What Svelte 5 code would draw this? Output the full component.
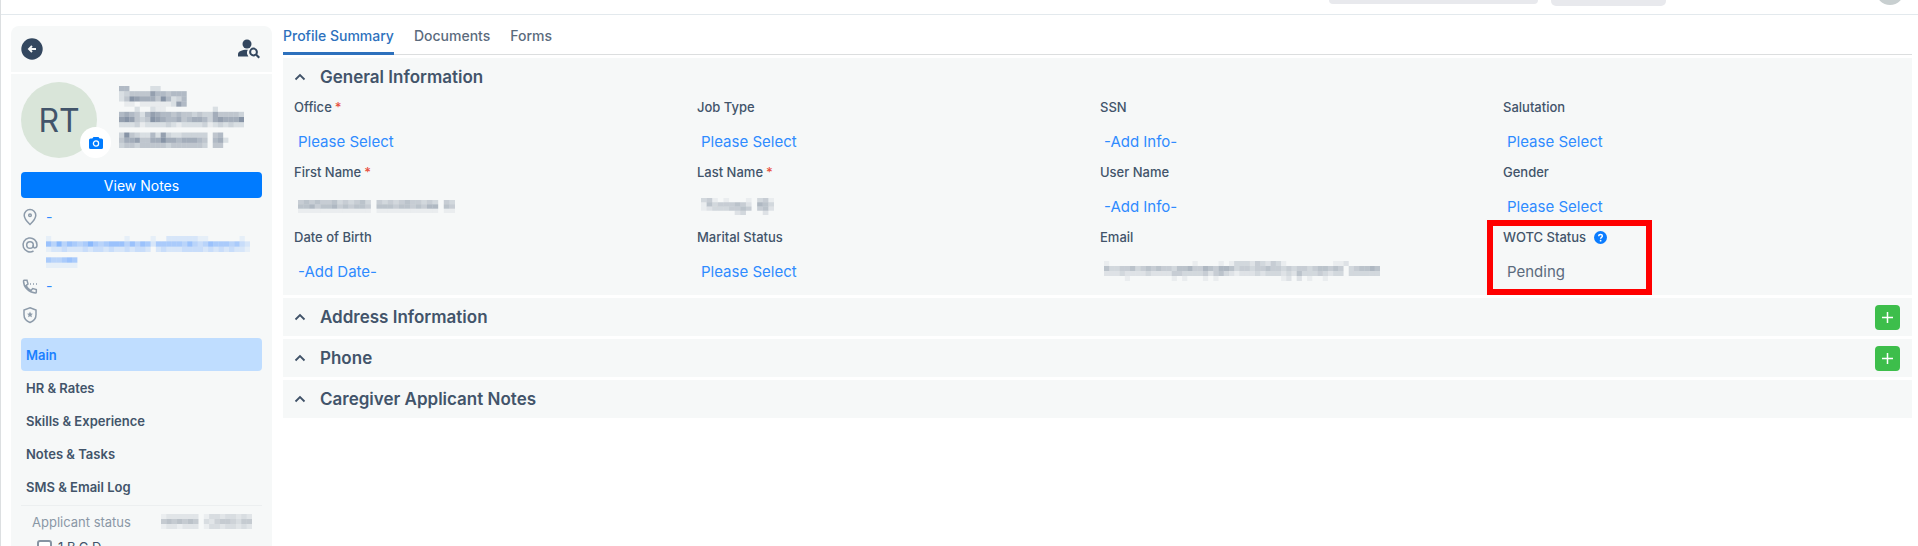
<script>
  const nav = ['Main', 'HR & Rates', 'Skills & Experience', 'Notes & Tasks', 'SMS & Email Log'];
  const tabs = ['Profile Summary', 'Documents', 'Forms'];
  let activeNav = $state('Main');
  let activeTab = $state('Profile Summary');

  // Each string is one row of squares; every digit is the strength of a square.
  const masks = {
    name: [
      '550000220000000000000000',
      '234444755455500000000000',
      '248766648523500000000000',
      '011011111127500000000000',
      '000200211000000000200000',
      '565425765545443433644443',
      '787434876556456653676668',
      '222312222321222231232322',
      '000000000000000000000000',
      '384322527322333330450000',
      '466744668665666540562000',
      '344344444344444430440000'
    ],
    mail: [
      '100000000000000100001002222221100000010',
      '647465457545666464652555554643465554532',
      '122322232332322323320232223333232323221',
      '000000000000000000000000000000000000000',
      '544565000000000000000000000000000000000',
      '111111000000000000000000000000000000000'
    ],
    first: ['4545445343453043434544343043', '5564556454554055545545466054', '1111111111111011111111111011'],
    last: ['3410100010341', '1534445420653', '1233344540452', '0000002300020'],
    email: [
      '10000000000000000100001013332432431000000000112000000',
      '53344534545443556446546653443445443434434554540345565',
      '22232222322224433334245321222323332325333432330333333',
      '00001000000001010001010000000000001202010010000000000'
    ],
    status: ['12222220133233232', '56565650324554355', '12212220133233232']
  };

  const fields = [
    { label: 'Office', required: true, value: 'Please Select' },
    { label: 'Job Type', value: 'Please Select' },
    { label: 'SSN', value: '-Add Info-' },
    { label: 'Salutation', value: 'Please Select' },
    { label: 'First Name', required: true, mask: 'first', w: 157, h: 13 },
    { label: 'Last Name', required: true, mask: 'last', w: 73, h: 17 },
    { label: 'User Name', value: '-Add Info-' },
    { label: 'Gender', value: 'Please Select' },
    { label: 'Date of Birth', value: '-Add Date-' },
    { label: 'Marital Status', value: 'Please Select' },
    { label: 'Email', mask: 'email', w: 276, h: 20 },
    { label: 'WOTC Status', value: 'Pending', plain: true, help: true, marked: true }
  ];

  const sections = [
    { title: 'Address Information', add: true },
    { title: 'Phone', add: true },
    { title: 'Caregiver Applicant Notes', add: false }
  ];
</script>

{#snippet mosaic(key, width, height, color)}
  <svg class="mosaic" {width} {height} viewBox="0 0 {masks[key][0].length} {masks[key].length}" preserveAspectRatio="none" fill={color} aria-hidden="true">
    {#each masks[key] as row, y}
      {#each row.split('') as level, x}
        {#if level !== '0'}
          <rect {x} {y} width="1" height="1" opacity={Number(level) / 12} />
        {/if}
      {/each}
    {/each}
  </svg>
{/snippet}

{#snippet chevron()}
  <svg width="12" height="8" viewBox="0 0 12 8" fill="none" stroke="#405268" stroke-width="1.8" aria-hidden="true"><path d="M1.5 6.5 6 2l4.5 4.5" /></svg>
{/snippet}

<div class="page">
  <header>
    <input class="search" type="search" aria-label="Search" />
    <button class="action" aria-label="Quick action"></button>
    <button class="user" aria-label="Account"></button>
  </header>

  <div class="body">
    <aside>
      <div class="card tools">
        <button class="icon" aria-label="Back">
          <svg width="22" height="22" viewBox="0 0 22 22"><circle cx="11" cy="11" r="10.7" fill="#33475f" /><path d="M15 11H8.500M11 8 8 11l3 3" fill="none" stroke="#f6f8f8" stroke-width="1.900" /></svg>
        </button>
        <button class="icon" aria-label="Find person">
          <svg width="22" height="20" viewBox="0 0 22 20"><circle cx="9" cy="5" r="4.500" fill="#33475f" /><path d="M0 17.500v-2.300c0-3 5-4.700 9.800-4.400a6 6 0 0 0 .6 6.700z" fill="#33475f" /><circle cx="15.500" cy="13" r="3.400" fill="none" stroke="#33475f" stroke-width="2" /><path d="m18 15.500 3.300 3.300" stroke="#33475f" stroke-width="2.200" /></svg>
        </button>
      </div>

      <div class="card profile">
        <div class="person">
          <div class="avatar">
            RT
            <button class="camera" aria-label="Change photo">
              <svg width="14" height="12" viewBox="0 0 14 12"><path d="M4.500 0h5l1.200 1.500H12.500A1.500 1.500 0 0 1 14 3v7.500a1.500 1.500 0 0 1-1.500 1.500h-11A1.500 1.500 0 0 1 0 10.500V3a1.500 1.500 0 0 1 1.500-1.500h1.800z" fill="#007bff" /><circle cx="7" cy="6.500" r="2.600" fill="none" stroke="#fff" stroke-width="1.300" /></svg>
            </button>
          </div>
          {@render mosaic('name', 125, 62, '#50627c')}
        </div>

        <button class="notes">View Notes</button>

        <ul class="contact">
          <li>
            <svg width="18" height="18" viewBox="0 0 18 18"><path d="M9 16.500C5.200 13 3.200 10.200 3.200 7.300a5.800 5.800 0 0 1 11.600 0c0 2.900-2 5.700-5.800 9.200z" /><circle cx="9" cy="7.300" r="1.300" /></svg>
            <a href="#address">-</a>
          </li>
          <li class="tall">
            <svg width="18" height="18" viewBox="0 0 18 18"><circle cx="9" cy="9" r="3.300" /><path d="M12.300 9v1.300c0 2.300 3.700 2.300 3.700-1.300a7 7 0 1 0-3.500 6" /></svg>
            {@render mosaic('mail', 204, 32, '#3f8cff')}
          </li>
          <li>
            <svg width="18" height="18" viewBox="0 0 18 18"><path d="M3 3.200h3l1 3.700-2 1.700a12 12 0 0 0 5 5l1.700-2 3.600 1v2.700c0 .5-.3.800-.9.800C7.600 15.500 2.500 10 2.500 4c0-.5.200-.8.500-.8z" /><path d="M9 7h1M12 7h1M15 7h1" /></svg>
            <a href="#phone">-</a>
          </li>
          <li>
            <svg width="18" height="18" viewBox="0 0 18 18"><path d="m9 1.800 6 2.200v4.800c0 3.500-2.300 6.300-6 7.700-3.700-1.400-6-4.200-6-7.700V4z" /><path d="m9 5.500.9 2 2.100.2-1.600 1.400.5 2.200L9 10.200l-1.900 1.100.5-2.200L6 7.700l2.100-.2z" fill="#8d9baa" stroke="none" /></svg>
          </li>
        </ul>

        <nav>
          {#each nav as item}
            <button class:active={activeNav === item} onclick={() => (activeNav = item)}>{item}</button>
          {/each}
        </nav>

        <div class="status">
          <span>Applicant status</span>
          {@render mosaic('status', 91, 15, '#7f8b9a')}
        </div>
        <label class="check"><input type="checkbox" />1.B.C.D</label>
      </div>
    </aside>

    <main>
      <div class="tabs" role="tablist">
        {#each tabs as tab}
          <button role="tab" aria-selected={activeTab === tab} class:active={activeTab === tab} onclick={() => (activeTab = tab)}>{tab}</button>
        {/each}
      </div>

      <section class="panel">
        <h2><button class="toggle" aria-expanded="true">{@render chevron()}General Information</button></h2>
        <div class="fields">
          {#each fields as f, i}
            <div class="field" class:marked={f.marked}>
              <div class="label" id="field-{i}">
                {f.label}{#if f.required}<span class="star">*</span>{/if}
                {#if f.help}
                  <button class="icon help" aria-label="About WOTC status">
                    <svg width="13" height="13" viewBox="0 0 13 13"><circle cx="6.500" cy="6.500" r="6.500" fill="#0a7cff" /><path d="M4.700 5.200c0-2.400 3.700-2.300 3.700-.1 0 1.300-1.800 1.300-1.800 2.600" fill="none" stroke="#fff" stroke-width="1.400" /><circle cx="6.600" cy="9.700" r=".9" fill="#fff" /></svg>
                  </button>
                {/if}
              </div>
              {#if f.mask}
                <div class="value">{@render mosaic(f.mask, f.w, f.h, '#68788c')}</div>
              {:else}
                <button class="value" class:plain={f.plain} aria-describedby="field-{i}">{f.value}</button>
              {/if}
            </div>
          {/each}
        </div>
      </section>

      {#each sections as s}
        <section class="panel row">
          <h2><button class="toggle" aria-expanded="false">{@render chevron()}{s.title}</button></h2>
          {#if s.add}
            <button class="add" aria-label="Add {s.title}">
              <svg width="11" height="11" viewBox="0 0 11 11" stroke="#fff" stroke-width="1.500"><path d="M5.500 0v11M0 5.500h11" /></svg>
            </button>
          {/if}
        </section>
      {/each}
    </main>
  </div>
</div>

<style>
  :global(body) {
    margin: 0;
    background: #fff;
  }
  .page {
    box-sizing: border-box;
    height: 100vh;
    overflow: hidden;
    border-left: 1px solid #dcdfe1;
    font-family: Inter, 'Liberation Sans', sans-serif;
    font-size: 14px;
    color: #42546a;
  }
  button,
  input {
    font: inherit;
    color: inherit;
    margin: 0;
    padding: 0;
    border: 0;
    background: none;
  }
  button {
    cursor: pointer;
    text-align: left;
  }
  .mosaic,
  svg {
    display: block;
    flex: none;
  }
  header {
    display: flex;
    justify-content: flex-end;
    align-items: flex-end;
    height: 14px;
    overflow: hidden;
    border-bottom: 1px solid #e3e9ed;
  }
  header .search {
    width: 209px;
    height: 32px;
    margin: 0 13px 10px 0;
    border-radius: 4px;
    background: #e8e9ed;
  }
  header .action {
    width: 115px;
    height: 32px;
    margin: 0 210px 8px 0;
    border-radius: 5px;
    background: #e8e9ed;
  }
  header .user {
    width: 28px;
    height: 28px;
    margin: 0 14px 9px 0;
    border-radius: 50%;
    background: #c8cfd0;
  }
  .body {
    display: flex;
    gap: 11px;
    padding: 0 6px 0 10px;
  }
  aside {
    flex: none;
    display: flex;
    flex-direction: column;
    gap: 2px;
    width: 261px;
    padding-top: 11px;
  }
  .card {
    background: #f6f8f8;
  }
  .tools {
    display: flex;
    justify-content: space-between;
    align-items: center;
    height: 46px;
    padding: 0 12px 0 10px;
    border-radius: 8px 8px 0 0;
  }
  .profile {
    padding: 8px 10px 20px;
  }
  .person {
    display: flex;
    align-items: flex-start;
    gap: 22px;
  }
  .person > :global(.mosaic) {
    margin-top: 4px;
  }
  .avatar {
    position: relative;
    display: grid;
    place-items: center;
    width: 76px;
    height: 76px;
    border-radius: 50%;
    background: #d9e5d9;
    color: #42546a;
    font-size: 32px;
  }
  .camera {
    position: absolute;
    right: -14px;
    bottom: 0;
    display: grid;
    place-items: center;
    width: 31px;
    height: 31px;
    border-radius: 50%;
    background: #fff;
  }
  .notes {
    width: 100%;
    height: 26px;
    margin-top: 14px;
    border-radius: 4px;
    background: #007bff;
    color: #fff;
    text-align: center;
  }
  .contact {
    list-style: none;
    margin: 4px 0 9px;
    padding: 0;
  }
  .contact li {
    display: flex;
    gap: 7px;
    height: 29px;
    align-items: center;
    line-height: 20px;
  }
  .contact li.tall {
    height: 40px;
    align-items: flex-start;
    padding-top: 5px;
    box-sizing: border-box;
  }
  .contact svg:not(.mosaic) {
    fill: none;
    stroke: #8d9baa;
    stroke-width: 1.5;
  }
  .contact a {
    color: #2f8bff;
    text-decoration: none;
  }
  nav {
    display: flex;
    flex-direction: column;
    padding-bottom: 2px;
    border-bottom: 1px solid #eceff0;
  }
  nav button {
    height: 33px;
    padding: 0 5px;
    border-radius: 4px;
    font-size: 13px;
    font-weight: 600;
  }
  nav .active {
    background: #bfddff;
    color: #1a80ff;
  }
  .status {
    display: flex;
    justify-content: space-between;
    align-items: center;
    height: 31px;
    padding: 0 10px 0 11px;
    font-size: 13px;
    color: #8a97a6;
  }
  .check {
    display: flex;
    align-items: center;
    gap: 6px;
    padding-left: 16px;
    font-size: 13px;
    line-height: 20px;
  }
  .check input {
    appearance: none;
    width: 15px;
    height: 15px;
    border: 2px solid #8794a3;
    border-radius: 3px;
    background: #fff;
  }
  main {
    flex: 1;
    min-width: 0;
    display: flex;
    flex-direction: column;
    gap: 3px;
  }
  .tabs {
    display: flex;
    gap: 20px;
    height: 39px;
    border-bottom: 1px solid #dcdedf;
  }
  .tabs button {
    box-sizing: border-box;
    height: 40px;
    padding-top: 4px;
    border-bottom: 3px solid transparent;
    font-weight: 500;
    color: #5b6b7d;
  }
  .tabs button.active {
    color: #2e71bd;
    border-color: #2e71bd;
  }
  .panel {
    background: #f6f8f8;
    padding: 0 12px 0 11px;
  }
  .row {
    display: flex;
    align-items: center;
    justify-content: space-between;
  }
  h2 {
    margin: 0;
    font-size: 17px;
    font-weight: 600;
  }
  .toggle {
    display: flex;
    align-items: center;
    gap: 14px;
    height: 38px;
  }
  .fields {
    display: grid;
    grid-template-columns: repeat(4, 1fr);
    margin-right: -6px;
    padding: 1px 0 3px;
  }
  .field {
    position: relative;
    height: 65px;
  }
  .label {
    display: flex;
    align-items: center;
    height: 20px;
    margin-bottom: 12px;
    font-size: 13px;
    font-weight: 500;
  }
  .star {
    margin-left: 3px;
    color: #e8513f;
  }
  .help {
    margin-left: 8px;
  }
  .value {
    display: flex;
    align-items: center;
    height: 24px;
    padding-left: 4px;
    font-size: 15px;
    color: #2f8bff;
  }
  .plain {
    color: #5b6b7d;
  }
  .marked::after {
    content: '';
    position: absolute;
    left: -16px;
    top: -7px;
    width: 153px;
    height: 63px;
    border: 6px solid #f00;
    pointer-events: none;
  }
  .add {
    display: grid;
    place-items: center;
    width: 25px;
    height: 25px;
    border-radius: 4px;
    background: #3dbe4b;
  }
</style>
